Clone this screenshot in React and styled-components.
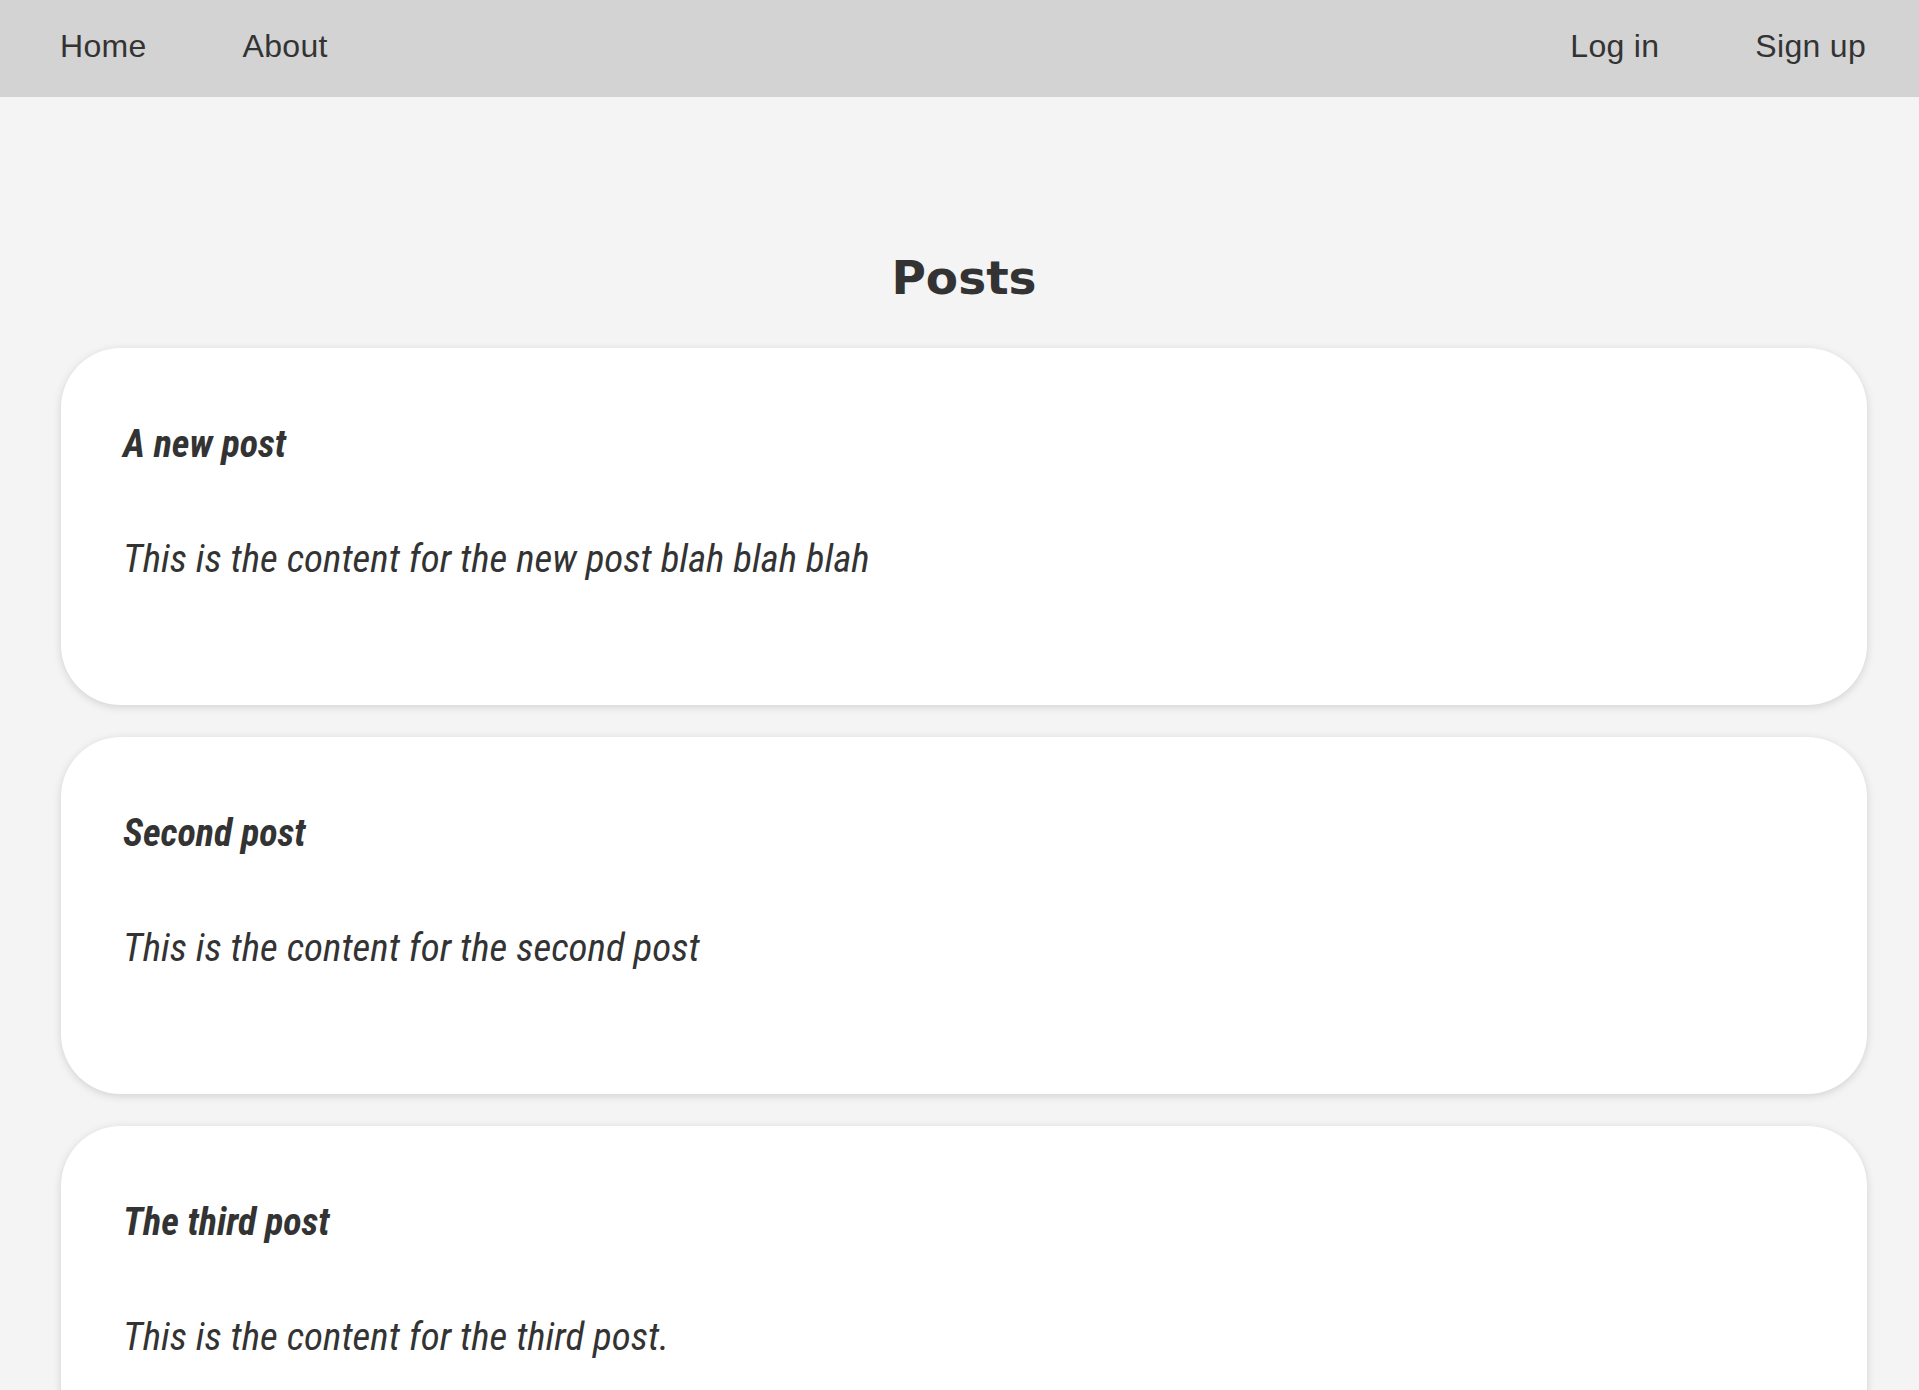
import React from 'react';
import styled, { createGlobalStyle } from 'styled-components';

const GlobalStyle = createGlobalStyle`
  html {
    scrollbar-width: none;
  }
  html::-webkit-scrollbar {
    display: none;
  }
  body {
    margin: 0;
    background: #f4f4f4;
    color: #333;
    font-family: "Liberation Sans", Arial, sans-serif;
  }
`;

const NavBar = styled.nav`
  display: flex;
  align-items: center;
  justify-content: space-between;
  height: 97px;
  padding: 0 5px 4px 12px;
  box-sizing: border-box;
  background: #d3d3d3;
`;

const NavGroup = styled.div`
  display: flex;
  align-items: center;
`;

const NavLink = styled.a`
  padding: 0 48px;
  font-size: 32px;
  letter-spacing: 0.3px;
  color: #333;
  text-decoration: none;
  cursor: pointer;
`;

const Main = styled.main`
  padding: 153px 52px 40px 61px;
`;

const PageTitle = styled.h1`
  margin: 0 0 43px;
  text-align: center;
  font-family: "DejaVu Sans", Verdana, sans-serif;
  font-weight: 700;
  font-size: 47px;
  color: #333;
`;

const PostList = styled.div`
  display: flex;
  flex-direction: column;
  gap: 32px;
`;

const PostCard = styled.article`
  background: #fff;
  border-radius: 60px;
  padding: 74px 62px 123px;
  box-shadow: 0 2px 8px rgba(0, 0, 0, 0.14);
`;

// handwritten-style condensed italic for the post text
const handFont = `"Roboto Condensed", "DejaVu Sans", sans-serif`;

const PostTitle = styled.h2`
  margin: 0 0 70px;
  font-family: ${handFont};
  font-style: italic;
  font-weight: 700;
  font-size: 38px;
  color: #333;
`;

const PostBody = styled.p`
  margin: 0;
  font-family: ${handFont};
  font-style: italic;
  font-weight: 400;
  font-size: 39px;
  color: #333;
`;

const posts = [
  { title: 'A new post', content: 'This is the content for the new post blah blah blah' },
  { title: 'Second post', content: 'This is the content for the second post' },
  { title: 'The third post', content: 'This is the content for the third post.' },
];

const App = () => {
  return (
    <>
      <GlobalStyle />
      <NavBar>
        <NavGroup>
          <NavLink href="#">Home</NavLink>
          <NavLink href="#">About</NavLink>
        </NavGroup>
        <NavGroup>
          <NavLink href="#">Log in</NavLink>
          <NavLink href="#">Sign up</NavLink>
        </NavGroup>
      </NavBar>
      <Main>
        <PageTitle>Posts</PageTitle>
        <PostList>
          {posts.map((post) => (
            <PostCard key={post.title}>
              <PostTitle>{post.title}</PostTitle>
              <PostBody>{post.content}</PostBody>
            </PostCard>
          ))}
        </PostList>
      </Main>
    </>
  );
};

export default App;
